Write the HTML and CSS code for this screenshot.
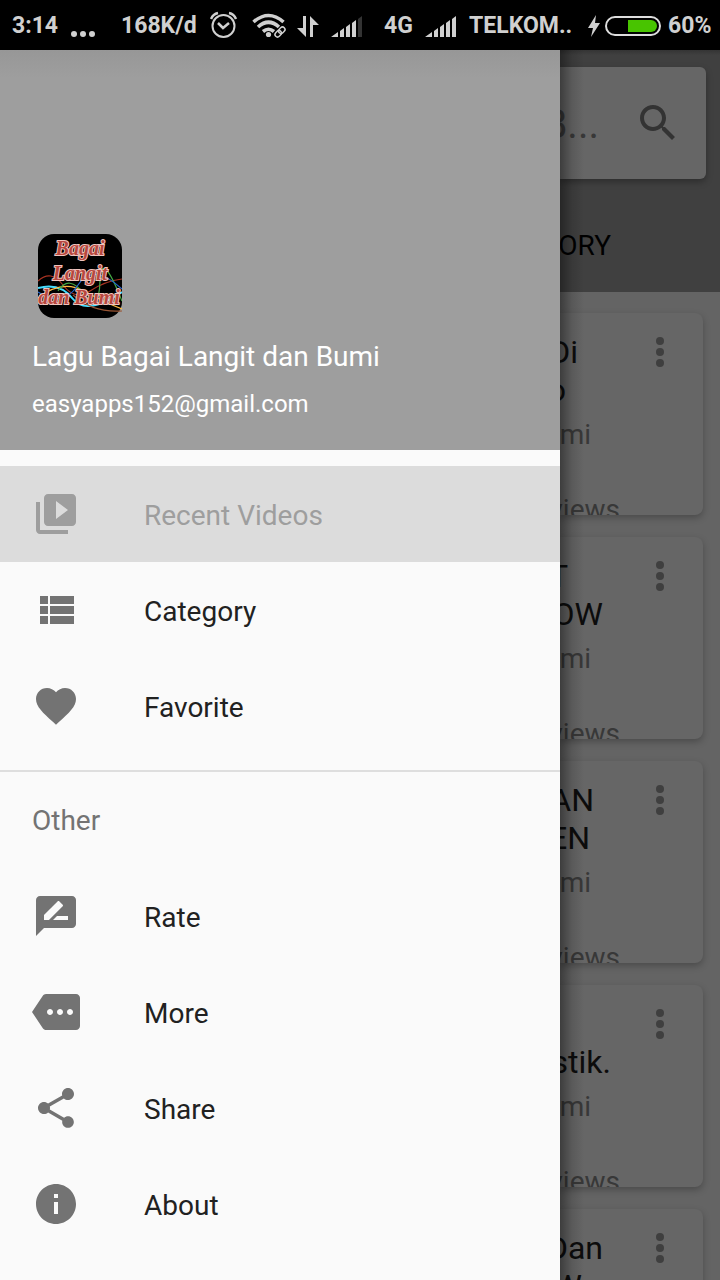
FILE: index.html
```html
<!DOCTYPE html>
<html lang="id">
<head>
<meta charset="utf-8">
<meta name="viewport" content="width=device-width, initial-scale=1">
<title>Lagu Bagai Langit dan Bumi</title>
<link rel="stylesheet" href="styles.css">
</head>
<body>
<header class="status">
  <span>3:14</span>
  <svg width="26" height="50" viewBox="0 0 26 50"><g fill="#d0d0d0"><circle cx="3" cy="33" r="3"/><circle cx="12" cy="33" r="3"/><circle cx="21" cy="33" r="3"/></g></svg>
  <span>168K/d</span>
  <svg width="28" height="50" viewBox="0 0 28 50" fill="none" stroke="#d0d0d0" stroke-width="2"><circle cx="13.500" cy="25" r="11"/><path d="M8 22l5 5 6-5" stroke-width="2.500"/><path d="M1 18q2-5 7-6M26 18q-2-5-7-6" stroke-width="2.500"/></svg>
  <svg width="36" height="50" viewBox="0 0 36 50" fill="none" stroke="#d0d0d0"><path d="M1.500 21Q16.500 8 31.500 21M6 26q10.500-9.500 21 0M11 30.500q5.500-4.500 11 0" stroke-width="3.600"/><circle cx="16.500" cy="33.500" r="2.600" fill="#d0d0d0" stroke="none"/><g transform="rotate(-45 28 31)"><rect x="21" y="27" width="14" height="8" fill="#000" stroke="none"/><g stroke-width="1.500"><rect x="22" y="28.500" width="7" height="5" rx="2.500"/><rect x="27" y="28.500" width="7" height="5" rx="2.500"/></g></g></svg>
  <svg width="24" height="50" viewBox="0 0 24 50" fill="#d0d0d0"><path d="M6 15h3v21L0 27h6zM13 15l9 9h-6v12h-3z"/></svg>
  <svg width="32" height="50" viewBox="0 0 32 50" fill="#d0d0d0"><path d="M0 36l7-5v5zM9 30l4-3v9H9zM15 26l4-3v13h-4zM21 22l4-3v17h-4z"/><path d="M27 18l4-3v21h-4z" fill="#333"/></svg>
  <span>4G</span>
  <svg width="32" height="50" viewBox="0 0 32 50" fill="#d0d0d0"><path d="M0 36l7-5v5zM9 30l4-3v9H9zM15 26l4-3v13h-4zM21 22l4-3v17h-4zM27 18l4-3v21h-4z"/></svg>
  <span>TELKOM..</span>
  <svg width="12" height="50" viewBox="0 0 12 50" fill="#d0d0d0"><path d="M8 14L0 27h5L3 36l9-14H7z"/></svg>
  <svg width="56" height="50" viewBox="0 0 56 50"><rect x="1" y="16" width="54" height="18" rx="9" fill="none" stroke="#ddd" stroke-width="2"/><path d="M23 19h23a6 6 0 0 1 0 12H23z" fill="#48c400"/></svg>
  <span>60%</span>
</header>
<div class="screen">
  <aside class="drawer">
    <div class="profile">
      <svg class="logo" viewBox="0 0 84 84" role="img" aria-label="Bagai Langit dan Bumi">
        <rect width="84" height="84" rx="16"/>
        <g fill="none" stroke-width="1.200">
          <path d="M0 47Q13 35 25 51T52 57T84 45" stroke="#a32"/>
          <path d="M0 54Q22 48 35 65T84 58" stroke="#4df" stroke-width="2"/>
          <path d="M0 64Q24 45 46 57T84 75" stroke="#fb4"/>
          <path d="M20 57Q31 40 46 60T62 47T84 67" stroke="#4a4"/>
          <path d="M0 58Q25 74 40 51T84 55" stroke="#26c"/>
          <path d="M35 61Q55 79 84 77" stroke="#953"/>
        </g>
        <g class="logo-text">
          <text x="42" y="21">Bagai</text>
          <text x="42" y="46">Langit</text>
          <text x="41" y="70">dan Bumi</text>
        </g>
      </svg>
      <div class="name">Lagu Bagai Langit dan Bumi</div>
      <div class="mail">easyapps152@gmail.com</div>
    </div>
    <nav>
      <div class="group">
        <a class="item selected" href="#recent"><svg viewBox="0 0 24 24"><path d="M4 6H2v14c0 1.100.9 2 2 2h14v-2H4V6zm16-4H8c-1.100 0-2 .9-2 2v12c0 1.100.9 2 2 2h12c1.100 0 2-.9 2-2V4c0-1.100-.9-2-2-2zm-8 12.500v-9l6 4.500-6 4.500z"/></svg>Recent Videos</a>
        <a class="item" href="#category"><svg viewBox="0 0 24 24"><path d="M4 14h4v-4H4v4zm0 5h4v-4H4v4zM4 9h4V5H4v4zm5 5h12v-4H9v4zm0 5h12v-4H9v4zM9 5v4h12V5H9z"/></svg>Category</a>
        <a class="item" href="#favorite"><svg viewBox="0 0 24 24"><path d="M12 21.350l-1.450-1.320C5.400 15.360 2 12.280 2 8.500 2 5.420 4.420 3 7.500 3c1.740 0 3.410.81 4.500 2.090C13.090 3.810 14.760 3 16.500 3 19.580 3 22 5.420 22 8.500c0 3.780-3.400 6.860-8.550 11.540L12 21.350z"/></svg>Favorite</a>
      </div>
      <div class="more">
        <h2 class="subhead">Other</h2>
        <a class="item" href="#rate"><svg viewBox="0 0 24 24"><path d="M20 2H4c-1.100 0-1.990.9-1.990 2L2 22l4-4h14c1.100 0 2-.9 2-2V4c0-1.100-.9-2-2-2zM6 14v-2.470l6.880-6.880c.2-.2.510-.2.710 0l1.770 1.770c.2.200.2.510 0 .710L8.470 14H6zm12 0h-7.500l2-2H18v2z"/></svg>Rate</a>
        <a class="item" href="#more"><svg viewBox="0 0 24 24"><path d="M22 3H7c-.69 0-1.230.350-1.590.880L0 12l5.410 8.110c.360.530.970.890 1.660.890H22c1.100 0 2-.9 2-2V5c0-1.100-.9-2-2-2zM9 13.500c-.83 0-1.500-.67-1.500-1.500s.67-1.500 1.500-1.500 1.500.67 1.500 1.500-.67 1.500-1.500 1.500zm5 0c-.83 0-1.500-.67-1.500-1.500s.67-1.500 1.500-1.500 1.500.67 1.500 1.500-.67 1.500-1.500 1.500zm5 0c-.83 0-1.500-.67-1.500-1.500s.67-1.500 1.500-1.500 1.500.67 1.500 1.500-.67 1.500-1.500 1.500z"/></svg>More</a>
        <a class="item" href="#share"><svg viewBox="0 0 24 24"><path d="M18 16.080c-.76 0-1.440.3-1.960.77L8.910 12.700c.05-.23.090-.46.090-.7s-.04-.47-.09-.7l7.050-4.110c.54.500 1.250.81 2.040.81 1.660 0 3-1.340 3-3s-1.340-3-3-3-3 1.340-3 3c0 .24.040.47.090.7L8.040 9.810C7.500 9.310 6.790 9 6 9c-1.660 0-3 1.340-3 3s1.340 3 3 3c.79 0 1.500-.31 2.040-.81l7.120 4.160c-.05.210-.08.430-.08.650 0 1.610 1.310 2.920 2.920 2.920s2.920-1.310 2.920-2.920-1.310-2.920-2.920-2.920z"/></svg>Share</a>
        <a class="item" href="#about"><svg viewBox="0 0 24 24"><path d="M12 2C6.480 2 2 6.480 2 12s4.480 10 10 10 10-4.480 10-10S17.520 2 12 2zm1 15h-2v-6h2v6zm0-8h-2V7h2v2z"/></svg>About</a>
      </div>
    </nav>
  </aside>
  <main class="page">
    <div class="toolbar">
      <div class="search">
        <div class="line query" style="width:39px"><span>B...</span></div>
        <button class="icon-button" aria-label="Search"><svg width="48" height="48" viewBox="0 0 24 24"><path d="M15.500 14h-.79l-.28-.27C15.410 12.590 16 11.110 16 9.500 16 5.910 13.090 3 9.500 3S3 5.910 3 9.500 5.910 16 9.500 16c1.610 0 3.090-.59 4.230-1.570l.27.280v.79l5 4.990L20.490 19l-4.990-5zm-6 0C7.010 14 5 11.990 5 9.500S7.010 5 9.500 5 14 7.010 14 9.500 11.990 14 9.500 14z"/></svg></button>
      </div>
      <div class="line tab" style="width:51px"><span>ORY</span></div>
    </div>
    <div class="cards">
      <article class="card">
        <div><div class="line title" style="width:18px"><span>Di</span></div><div class="line title" style="width:6px"><span>o</span></div><div class="line sub" style="width:31px"><span>mi</span></div><div class="line views" style="width:60px"><span>views</span></div></div>
        <button class="icon-button dots" aria-label="Options"><svg width="10" height="32" viewBox="0 0 10 32"><circle cx="5" cy="5" r="4"/><circle cx="5" cy="16" r="4"/><circle cx="5" cy="27" r="4"/></svg></button>
      </article>
      <article class="card">
        <div><div class="line title" style="width:8px"><span>T</span></div><div class="line title" style="width:43px"><span>OW</span></div><div class="line sub" style="width:31px"><span>mi</span></div><div class="line views" style="width:60px"><span>views</span></div></div>
        <button class="icon-button dots" aria-label="Options"><svg width="10" height="32" viewBox="0 0 10 32"><circle cx="5" cy="5" r="4"/><circle cx="5" cy="16" r="4"/><circle cx="5" cy="27" r="4"/></svg></button>
      </article>
      <article class="card">
        <div><div class="line title" style="width:34px"><span>AN</span></div><div class="line title" style="width:30px"><span>EN</span></div><div class="line sub" style="width:31px"><span>mi</span></div><div class="line views" style="width:60px"><span>views</span></div></div>
        <button class="icon-button dots" aria-label="Options"><svg width="10" height="32" viewBox="0 0 10 32"><circle cx="5" cy="5" r="4"/><circle cx="5" cy="16" r="4"/><circle cx="5" cy="27" r="4"/></svg></button>
      </article>
      <article class="card">
        <div><div class="line title"></div><div class="line title" style="width:51px"><span>stik.</span></div><div class="line sub" style="width:31px"><span>mi</span></div><div class="line views" style="width:60px"><span>views</span></div></div>
        <button class="icon-button dots" aria-label="Options"><svg width="10" height="32" viewBox="0 0 10 32"><circle cx="5" cy="5" r="4"/><circle cx="5" cy="16" r="4"/><circle cx="5" cy="27" r="4"/></svg></button>
      </article>
      <article class="card">
        <div><div class="line title" style="width:43px"><span>Dan</span></div><div class="line title" style="width:22px"><span>W</span></div></div>
        <button class="icon-button dots" aria-label="Options"><svg width="10" height="32" viewBox="0 0 10 32"><circle cx="5" cy="5" r="4"/><circle cx="5" cy="16" r="4"/><circle cx="5" cy="27" r="4"/></svg></button>
      </article>
    </div>
  </main>
</div>
</body>
</html>
```
FILE: styles.css
```css
* { box-sizing: border-box; }
body {
  margin: 0;
  height: 100vh;
  display: flex;
  flex-direction: column;
  overflow: hidden;
  font-family: Roboto, "Liberation Sans", sans-serif;
  background: #646464;
}
.status {
  flex: none;
  height: 50px;
  padding-left: 12px;
  display: grid;
  grid-template-columns: 59px 50px 89px 42px 45px 34px 53px 41px 44px 119px 17px 63px auto;
  align-items: center;
  background: #000;
  color: #d0d0d0;
  font-size: 23px;
  font-weight: 700;
  line-height: 52px;
  white-space: nowrap;
}
.status svg { display: block; }
.screen {
  flex: 1;
  min-height: 0;
  display: grid;
  grid-template-columns: 7fr 2fr;
}
.drawer { background: #fafafa; min-width: 0; overflow: hidden; }
.profile {
  height: 400px;
  padding: 0 32px 30px;
  display: flex;
  flex-direction: column;
  justify-content: flex-end;
  background: linear-gradient(#979797, #9e9e9e 28px);
  color: #fff;
}
.logo { width: 84px; height: 84px; margin: 0 6px 19px; }
.logo-text {
  font: italic 700 20px "Liberation Serif", serif;
  text-anchor: middle;
  fill: #b8473e;
  stroke: #efc5bf;
  stroke-width: 2px;
  paint-order: stroke;
}
.name { font-size: 28px; line-height: 40px; }
.mail { font-size: 24px; line-height: 32px; padding-top: 11px; }
.group { padding: 16px 0; }
.more { border-top: 2px solid #dedede; }
.item {
  height: 96px;
  padding: 2px 32px 0;
  display: flex;
  align-items: center;
  gap: 64px;
  color: #212121;
  font-size: 28px;
  text-decoration: none;
}
.item svg { width: 48px; height: 48px; margin-bottom: 2px; fill: #737373; }
.selected { background: #dcdcdc; color: #9e9e9e; }
.selected svg { fill: #9e9e9e; }
.subhead {
  margin: 0;
  padding: 2px 32px 0;
  font-size: 28px;
  font-weight: 400;
  line-height: 94px;
  color: #737373;
}
.page {
  position: relative;
  min-width: 0;
  overflow: hidden;
  color: #0c0c0c;
}
.page::after {
  content: "";
  position: absolute;
  inset: 0 auto 0 0;
  width: 24px;
  background: linear-gradient(90deg, rgba(0,0,0,.4), rgba(0,0,0,.12) 50%, transparent);
  pointer-events: none;
}
.line {
  display: flex;
  justify-content: flex-end;
  white-space: nowrap;
}
.icon-button {
  flex: none;
  padding: 0;
  border: 0;
  background: none;
  fill: #333;
}
.icon-button svg { display: block; }
.toolbar {
  height: 242px;
  padding: 17px 14px 0 0;
  background: linear-gradient(#343434, #404040 5px);
}
.search {
  height: 112px;
  padding-right: 24px;
  display: flex;
  align-items: center;
  justify-content: space-between;
  border-radius: 0 6px 6px 0;
  background: #666;
  box-shadow: 0 3px 7px rgba(0,0,0,.3);
}
.query { font-size: 40px; line-height: 48px; padding-top: 4px; color: #383838; }
.tab { font-size: 28px; line-height: 134px; color: #000; }
.cards {
  padding: 21px 17px 0 0;
  display: flex;
  flex-direction: column;
  gap: 22px;
}
.card {
  flex: none;
  height: 202px;
  padding: 20px 38px 0 0;
  display: flex;
  align-items: flex-start;
  justify-content: space-between;
  overflow: hidden;
  border-radius: 0 8px 8px 0;
  background: #666;
  box-shadow: 0 3px 7px rgba(0,0,0,.25);
}
.title { height: 38px; font-size: 32px; line-height: 38px; }
.sub { padding-top: 8px; font-size: 28px; line-height: 36px; color: #383838; }
.views { padding-top: 39px; font-size: 28px; line-height: 36px; color: #383838; }
.dots { padding-top: 3px; fill: #3f3f3f; }
```
